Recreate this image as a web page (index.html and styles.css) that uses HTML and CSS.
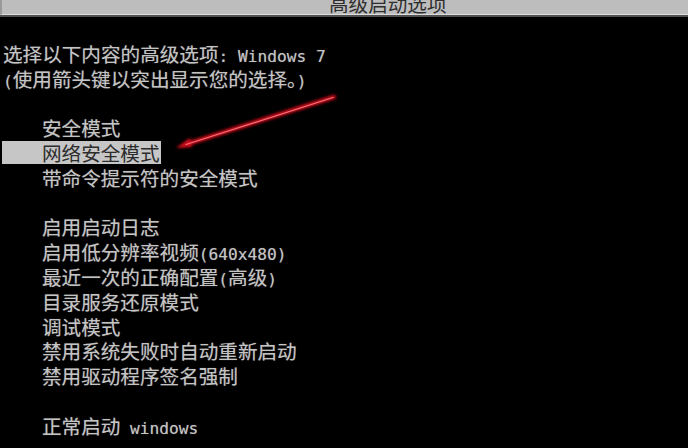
FILE: index.html
```html
<!DOCTYPE html>
<html lang="zh-CN">
<head>
<meta charset="utf-8">
<title>高级启动选项</title>
<link rel="stylesheet" href="styles.css">
</head>
<body>
<div class="screen">
  <div class="titlebar"><span class="title">高级启动选项</span></div>
  <div class="console">
    <div class="blank"></div>
    <div class="line">选择以下内容的高级选项<span class="a">: Windows 7</span></div>
    <div class="line"><span class="a">(</span>使用箭头键以突出显示您的选择。<span class="a">)</span></div>
    <div class="blank"></div>
    <div class="item">安全模式</div>
    <div class="item selected">网络安全模式</div>
    <div class="item">带命令提示符的安全模式</div>
    <div class="blank"></div>
    <div class="item">启用启动日志</div>
    <div class="item">启用低分辨率视频<span class="a">(640x480)</span></div>
    <div class="item">最近一次的正确配置<span class="a">(</span>高级<span class="a">)</span></div>
    <div class="item">目录服务还原模式</div>
    <div class="item">调试模式</div>
    <div class="item">禁用系统失败时自动重新启动</div>
    <div class="item">禁用驱动程序签名强制</div>
    <div class="blank"></div>
    <div class="item">正常启动<span class="a"> windows</span></div>
  </div>
  <svg class="arrow" width="688" height="448" viewBox="0 0 688 448" xmlns="http://www.w3.org/2000/svg">
    <defs>
      <filter id="glow" x="-20%" y="-20%" width="140%" height="140%">
        <feGaussianBlur stdDeviation="1.6"/>
      </filter>
    </defs>
    <g filter="url(#glow)">
      <line x1="334" y1="97" x2="184" y2="145" stroke="#e0101e" stroke-width="4" stroke-linecap="round"/>
      <polygon points="176,148 190,138 192,147" fill="#e0101e"/>
    </g>
    <line x1="333" y1="97.5" x2="186" y2="144.5" stroke="#f2707c" stroke-width="1.2" stroke-linecap="round"/>
  </svg>
</div>
</body>
</html>
```

FILE: styles.css
```css
html, body {
  margin: 0;
  padding: 0;
  background: #000;
}

.screen {
  position: relative;
  width: 688px;
  height: 448px;
  overflow: hidden;
  background: #000;
  font-family: "Noto Sans CJK SC", "Noto Sans", sans-serif;
  font-size: 19.6px;
  color: #c4c4c4;
}

.titlebar {
  height: 14px;
  overflow: hidden;
  background: #bdbdbd;
  border-left: 2px solid #9a9a9a;
  border-bottom: 1px solid #dcdcdc;
  box-shadow: 0 2px 0 #505050;
  padding-left: 327px;
  margin-bottom: 2px;
}

.title {
  display: block;
  line-height: 20px;
  margin-top: -6px;
  color: #2e2e2e;
}

.console {
  padding-left: 3px;
  line-height: 24.8px;
  text-shadow: 0 0 1px rgba(200, 200, 200, 0.5);
}

.blank {
  height: 24.8px;
}

.line,
.item {
  height: 24.8px;
  white-space: pre;
}

.item {
  padding-left: 39px;
}

.item.selected {
  width: fit-content;
  margin-left: -1px;
  padding-left: 40px;
  padding-right: 1px;
  background: #c6c6c6;
  color: #2c2c2c;
  text-shadow: none;
  height: 23px;
  line-height: 23px;
  margin-bottom: 1.8px;
}

.a {
  font-family: "DejaVu Sans Mono", "Liberation Mono", monospace;
  font-size: 16.2px;
}

.arrow {
  position: absolute;
  left: 0;
  top: 0;
  pointer-events: none;
}
```
